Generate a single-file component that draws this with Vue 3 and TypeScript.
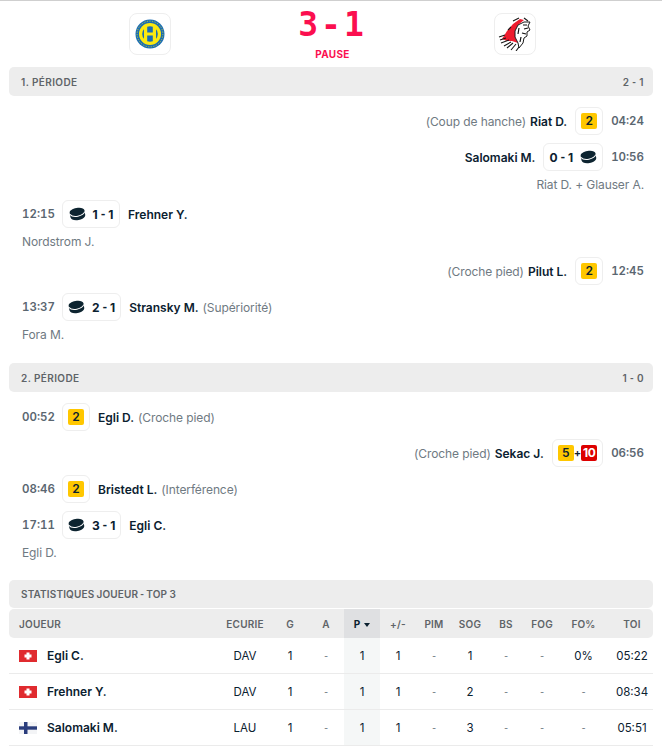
<script setup lang="ts">
interface Ev {
  side: 'l' | 'r'
  time: string
  name: string
  note?: string
  score?: [string, string]
  pen?: string
  pen2?: string
  assist?: string
}
interface Period {
  title: string
  score: [string, string]
  events: Ev[]
}
const periods: Period[] = [
  {
    title: '1. PÉRIODE',
    score: ['2', '1'],
    events: [
      { side: 'r', time: '04:24', name: 'Riat D.', note: '(Coup de hanche)', pen: '2' },
      { side: 'r', time: '10:56', name: 'Salomaki M.', score: ['0', '1'], assist: 'Riat D. + Glauser A.' },
      { side: 'l', time: '12:15', name: 'Frehner Y.', score: ['1', '1'], assist: 'Nordstrom J.' },
      { side: 'r', time: '12:45', name: 'Pilut L.', note: '(Croche pied)', pen: '2' },
      { side: 'l', time: '13:37', name: 'Stransky M.', note: '(Supériorité)', score: ['2', '1'], assist: 'Fora M.' },
    ],
  },
  {
    title: '2. PÉRIODE',
    score: ['1', '0'],
    events: [
      { side: 'l', time: '00:52', name: 'Egli D.', note: '(Croche pied)', pen: '2' },
      { side: 'r', time: '06:56', name: 'Sekac J.', note: '(Croche pied)', pen: '5', pen2: '10' },
      { side: 'l', time: '08:46', name: 'Bristedt L.', note: '(Interférence)', pen: '2' },
      { side: 'l', time: '17:11', name: 'Egli C.', score: ['3', '1'], assist: 'Egli D.' },
    ],
  },
]
const cols = ['G', 'A', 'P', '+/-', 'PIM', 'SOG', 'BS', 'FOG', 'FO%', 'TOI']
const players = [
  { flag: 'ch', name: 'Egli C.', team: 'DAV', v: ['1', '-', '1', '1', '-', '1', '-', '-', '0%', '05:22'] },
  { flag: 'ch', name: 'Frehner Y.', team: 'DAV', v: ['1', '-', '1', '1', '-', '2', '-', '-', '-', '08:34'] },
  { flag: 'fi', name: 'Salomaki M.', team: 'LAU', v: ['1', '-', '1', '1', '-', '3', '-', '-', '-', '05:51'] },
]
</script>

<template>
  <div class="page">
    <header class="top">
      <div class="logo-box">
        <svg width="34" height="34" viewBox="0 0 34 34">
          <circle cx="17" cy="17" r="14.5" fill="#1a6db4" />
          <circle cx="17" cy="17" r="11" fill="#fbe910" />
          <circle cx="17" cy="17" r="7.8" fill="#1a6db4" />
          <rect x="11" y="8" width="3.2" height="18" fill="#fbe910" />
          <rect x="19.8" y="8" width="3.2" height="18" fill="#fbe910" />
          <rect x="11" y="15.5" width="12" height="3" fill="#fbe910" />
          <circle cx="17" cy="17" r="12.9" fill="none" stroke="#fbe910" stroke-width="0.7" stroke-dasharray="1.2 1.4" />
        </svg>
      </div>
      <div class="result">
        <div class="big">3-1</div>
        <div class="status">PAUSE</div>
      </div>
      <div class="logo-box">
        <svg width="34" height="34" viewBox="0 0 34 34">
          <path d="M4 22 L9 14 L15 7 L22 2 L26 3 L20 8 L17 14 L17 20 L20 26 L14 24 L9 24 Z" fill="#ee1c2e" />
          <path d="M17 14 L20 8 L26 5 L32 5 L30 9 L32 13 L29 15 L29 19 L26 21 L25 26 L21 31 L20 26 L17 20 Z" fill="#fff" stroke="#1a1a1a" stroke-width="1" stroke-linejoin="round" />
          <path d="M25 8 L29 8 M26 12 L30 11 M24 16 L28 17 M21 11 L20 17 M23 20 L22 25" stroke="#111" stroke-width="1.2" fill="none" />
          <path d="M1 20 L7 18 M2 23 L8 21 M3 26 L11 23 M6 29 L13 25 M9 31 L15 26 M13 33 L18 27 M18 34 L21 30 M10 13 L13 10 M15 4 L21 1 M26 1 L30 4" stroke="#1a1a1a" stroke-width="1.1" fill="none" />
        </svg>
      </div>
    </header>

    <section v-for="p in periods" :key="p.title" class="period">
      <div class="bar">
        <span>{{ p.title }}</span>
        <span>{{ p.score[0] }} <span class="hy">-</span> {{ p.score[1] }}</span>
      </div>
      <div class="events">
        <div v-for="e in p.events" :key="e.time" class="event" :class="e.side">
          <div class="line">
            <span class="time">{{ e.time }}</span>
            <span class="box" :class="{ isgoal: e.score }">
              <template v-if="e.score">
                <svg class="puck" width="17" height="14" viewBox="0 0 17 14">
                  <g transform="rotate(-10 8.5 7)">
                    <path d="M1 4.6 C1 2.4 4.4 1 8.5 1 S16 2.4 16 4.6 V9 C16 11.4 12.6 13 8.5 13 S1 11.4 1 9 Z" fill="#0d2430" />
                    <path d="M1 6 C2.2 8.2 5.2 9.2 8.5 9.2 S14.8 8.2 16 6" stroke="#fff" stroke-width="1" fill="none" />
                  </g>
                </svg>
                <span class="goal">{{ e.score[0] }} <span class="hy">-</span> {{ e.score[1] }}</span>
              </template>
              <template v-else>
                <span class="pen">{{ e.pen }}</span>
                <template v-if="e.pen2">
                  <span class="plus">+</span>
                  <span class="pen red">{{ e.pen2 }}</span>
                </template>
              </template>
            </span>
            <span class="who">
              <b class="name">{{ e.name }}</b>
              <span v-if="e.note" class="note">{{ e.note }}</span>
            </span>
          </div>
          <div v-if="e.assist" class="assist">{{ e.assist }}</div>
        </div>
      </div>
    </section>

    <section class="stats">
      <div class="bar short"><span>STATISTIQUES JOUEUR <span class="hy">-</span> TOP 3</span></div>
      <table>
        <colgroup>
          <col class="c-name" />
          <col class="c-team" />
          <col v-for="n in 8" :key="n" class="c-num" />
          <col class="c-fo" />
          <col class="c-toi" />
        </colgroup>
        <thead>
          <tr>
            <th class="left">JOUEUR</th>
            <th>ECURIE</th>
            <th v-for="c in cols" :key="c" :class="{ sorted: c === 'P' }">
              {{ c }}<span v-if="c === 'P'" class="caret"></span>
            </th>
          </tr>
        </thead>
        <tbody>
          <tr v-for="r in players" :key="r.name">
            <td class="left">
              <div class="player">
                <svg v-if="r.flag === 'ch'" width="18" height="12" viewBox="0 0 18 12">
                  <rect width="18" height="12" fill="#e02b2f" />
                  <rect x="7.5" y="2.5" width="3" height="7" fill="#fff" />
                  <rect x="5.5" y="4.5" width="7" height="3" fill="#fff" />
                </svg>
                <svg v-else width="18" height="12" viewBox="0 0 18 12">
                  <rect width="18" height="12" fill="#f3f4f6" />
                  <rect x="5" width="3.5" height="12" fill="#2a3d7c" />
                  <rect y="4.3" width="18" height="3.4" fill="#2a3d7c" />
                </svg>
                <b>{{ r.name }}</b>
              </div>
            </td>
            <td>{{ r.team }}</td>
            <td v-for="(x, i) in r.v" :key="i" :class="{ sorted: i === 2, dim: x === '-' }">{{ x }}</td>
          </tr>
        </tbody>
      </table>
    </section>
  </div>
</template>

<style>
html, body { margin: 0; background: #fff; }
</style>

<style scoped>
.page {
  width: 662px;
  height: 750px;
  overflow: hidden;
  box-sizing: border-box;
  font-family: Inter, "Liberation Sans", sans-serif;
  font-size: 12px;
  color: #0b2130;
  background: #fff;
  border-top: 1px solid #cfcfcf;
}
.top {
  height: 66px;
  display: flex;
  justify-content: space-between;
  align-items: flex-start;
  padding: 12px 126px 0 129px;
  box-sizing: border-box;
}
.logo-box {
  width: 42px;
  height: 42px;
  box-sizing: border-box;
  border: 1px solid #eeeeee;
  border-radius: 8px;
  display: flex;
  align-items: center;
  justify-content: center;
}
.result {
  display: flex;
  flex-direction: column;
  align-items: center;
  color: #fb0f4f;
}
.big {
  font-family: "DejaVu Sans Mono", monospace;
  font-weight: 700;
  font-size: 33px;
  line-height: 30px;
  height: 30px;
  margin-top: -3px;
  letter-spacing: 3px;
}
.status {
  font-size: 10px;
  font-weight: 700;
  line-height: 12px;
  margin-top: 8px;
  letter-spacing: .3px;
}
.hy { font-family: Roboto, sans-serif; }
.bar {
  margin: 0 9px;
  height: 29px;
  padding: 0 9px 0 12px;
  background: #ededed;
  border-radius: 5px;
  display: flex;
  justify-content: space-between;
  align-items: center;
  font-size: 10px;
  font-weight: 600;
  letter-spacing: .4px;
  color: #5f6468;
}
.bar.short { height: 28px; letter-spacing: .15px; word-spacing: -.5px; }
.events { padding: 7px 18px 17px 22px; }
.event .line {
  height: 36px;
  display: flex;
  align-items: center;
  gap: 8px;
}
.event.r .line { flex-direction: row-reverse; }
.event.r { text-align: right; }
.time {
  font-weight: 600;
  font-size: 11.5px;
  color: #5a6670;
  font-feature-settings: "tnum";
}
.event.l .time { width: 32px; white-space: nowrap; }
.box {
  height: 28px;
  min-width: 28px;
  box-sizing: border-box;
  padding: 0 5px;
  border: 1px solid #eeeeee;
  border-radius: 6px;
  display: inline-flex;
  align-items: center;
  justify-content: center;
  gap: 7px;
}
.box.isgoal { min-width: 58px; }
.event.r .box.isgoal { flex-direction: row-reverse; }
.goal { font-weight: 700; white-space: nowrap; }
.pen {
  min-width: 16px;
  height: 16px;
  border-radius: 2px;
  background: #ffc700;
  font-weight: 600;
  line-height: 16px;
  text-align: center;
}
.pen.red {
  background: #dd0000;
  color: #fff;
  font-weight: 700;
  letter-spacing: -.6px;
}
.plus { margin: 0 -7px; font-weight: 600; font-size: 11px; }
.who { display: inline-flex; gap: 4px; white-space: nowrap; }
.event.r .who { flex-direction: row-reverse; }
.name { font-weight: 600; }
.note, .assist { color: #6f7a82; letter-spacing: -.1px; }
.assist { height: 21px; line-height: 19px; }
.stats { margin-top: -1px; }
table {
  width: 644px;
  margin: 1px 9px 0;
  border-collapse: separate;
  border-spacing: 0;
  table-layout: fixed;
}
.c-name { width: 209px; }
.c-team { width: 54px; }
.c-num { width: 36px; }
.c-fo { width: 47px; }
.c-toi { width: 46px; }
th {
  height: 29px;
  padding: 0;
  background: #ededed;
  font-size: 10px;
  font-weight: 600;
  letter-spacing: .2px;
  color: #5f6468;
  text-align: center;
}
th:first-child { border-radius: 5px 0 0 5px; }
th:last-child { border-radius: 0 5px 5px 0; }
th.sorted { background: #dfe0e2; color: #0b2130; font-weight: 700; }
.caret {
  display: inline-block;
  margin-left: 4px;
  vertical-align: 1px;
  border-left: 3px solid transparent;
  border-right: 3px solid transparent;
  border-top: 4px solid #0b2130;
}
td {
  height: 35px;
  padding: 0;
  text-align: center;
  border-bottom: 1px solid #ebebeb;
  color: #0b2130;
  font-size: 11.5px;
}
th:last-child, td:last-child { padding-left: 4px; }
td.sorted { background: #f5f7f7; }
td.dim { color: #6f7a82; font-family: Roboto, sans-serif; }
.left { text-align: left; padding-left: 10px; }
.player { display: flex; align-items: center; gap: 10px; }
.player b { font-weight: 600; font-size: 12px; }
</style>
